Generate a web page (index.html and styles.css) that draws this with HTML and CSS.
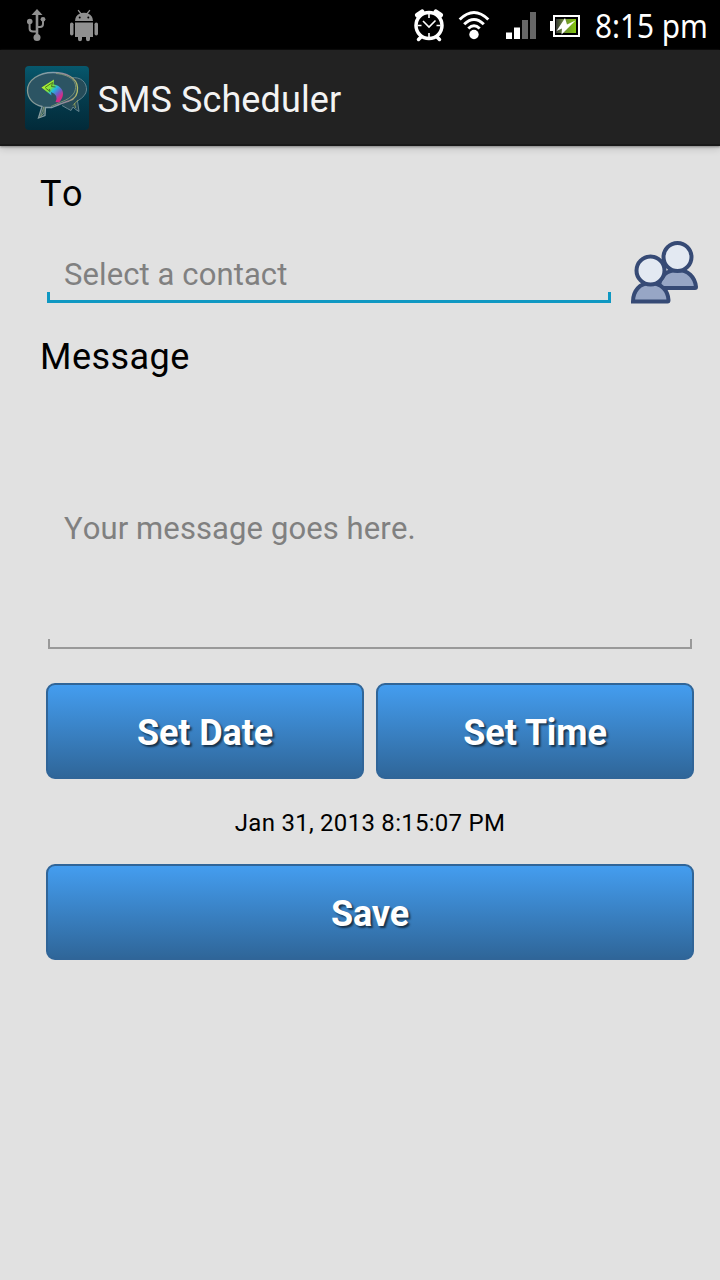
FILE: index.html
```html
<!DOCTYPE html>
<html lang="en">
<head>
<meta charset="utf-8">
<title>SMS Scheduler</title>
<link rel="stylesheet" href="styles.css">
</head>
<body>
<header class="status">
  <svg class="usb" width="20" height="34" viewBox="0 0 20 34" fill="none" stroke="#909090" stroke-width="2">
    <path d="M10 5V28" stroke-width="2.6"/><path d="M2.6 14V20.5Q2.6 23.500 6 23.500H10M16 12V16Q16 19 13 19H10"/>
    <path d="M10 1l5.500 6h-11z" fill="#909090" stroke="none"/>
    <circle cx="2.700" cy="13.500" r="2.800" fill="#909090" stroke="none"/><circle cx="16" cy="11.300" r="2.400" fill="#909090" stroke="none"/><circle cx="10" cy="29.500" r="3.500" fill="#909090" stroke="none"/>
  </svg>
  <svg class="droid" width="30" height="34" viewBox="0 0 30 34" fill="#909090">
    <path d="M6 12Q6 6.500 11 4.500L8.600 1.500 9.600 .8 12.300 4Q15 3.300 17.700 4L20.400 .8 21.400 1.500 19 4.500Q24 6.500 24 12z"/>
    <path d="M6 13.500H24V28H21V30.300a2 2 0 0 1-4 0V28h-4v2.300a2 2 0 0 1-4 0V28H6z"/>
    <rect x="1" y="13.500" width="3.500" height="13" rx="1.750"/><rect x="25.500" y="13.500" width="3.500" height="13" rx="1.750"/>
    <circle cx="10.700" cy="8.500" r="1" fill="#000"/><circle cx="19.300" cy="8.500" r="1" fill="#000"/>
  </svg>
  <svg class="alarm" width="32" height="34" viewBox="0 0 32 34" fill="none" stroke="#fff">
    <circle cx="16" cy="17.500" r="13" stroke-width="3.500"/>
    <path d="M4.500 7L9 4M27.500 7L23 4" stroke-width="5" stroke-linecap="round"/>
    <path d="M5.500 31.500l3-3M26.500 31.500l-3-3" stroke-width="3.500" stroke-linecap="round"/>
    <path d="M10 13l6 6 6.500-6.500M16 6v4M16 25v4M4.500 17.500h4M23.500 17.500h4" stroke-width="1.600"/>
  </svg>
  <svg class="wifi" width="32" height="32" viewBox="0 0 32 32" fill="none" stroke="#fff" stroke-width="3">
    <path d="M1.700 9.500Q16-4.500 30.300 9.500M6.200 14.300Q16 4.700 25.800 14.300M10.300 18.500Q16 13 21.700 18.500"/>
    <circle cx="16" cy="24.500" r="4.700" fill="#fff" stroke="none"/>
  </svg>
  <svg class="signal" width="32" height="28" viewBox="0 0 32 28">
    <path d="M1 20.500h6v6.500H1zM9 15.500h6V27H9z" fill="#fff"/><path d="M17 8h6v19h-6zM25 0h6v27h-6z" fill="#666"/>
  </svg>
  <svg class="battery" width="32" height="24" viewBox="0 0 32 24">
    <defs><linearGradient id="charge"><stop offset="0" stop-color="#363636"/><stop offset=".35" stop-color="#69843c"/><stop offset="1" stop-color="#84c80a"/></linearGradient></defs>
    <path d="M0 7h3v10H0z" fill="#fff"/><rect x="4" y="2" width="25" height="20" fill="#000" stroke="#fff" stroke-width="2"/>
    <rect x="6" y="5" width="20" height="14" fill="url(#charge)"/>
    <path d="M15 4L6.500 17 12 14.500 11.500 20.500 25.500 6.500 17 10.500z" fill="#fff"/>
  </svg>
  <span class="clock">8:15 pm</span>
</header>
<div class="actionbar">
  <svg class="logo" width="64" height="64" viewBox="0 0 64 64">
    <defs>
      <linearGradient id="tile" x1="0" y1="0" x2="0" y2="1"><stop offset="0" stop-color="#07586d"/><stop offset=".55" stop-color="#043a4b"/><stop offset="1" stop-color="#022a39"/></linearGradient>
      <linearGradient id="rim" x1="0" y1="0" x2="1" y2="0"><stop offset="0" stop-color="#8a9990"/><stop offset=".5" stop-color="#829eac"/><stop offset=".8" stop-color="#9a8695"/><stop offset="1" stop-color="#b5bf65"/></linearGradient>
      <linearGradient id="arrow" x1="17" y1="18" x2="36" y2="36" gradientUnits="userSpaceOnUse"><stop offset="0" stop-color="#c8f52a"/><stop offset=".34" stop-color="#7fe23a"/><stop offset=".48" stop-color="#20bde0"/><stop offset=".68" stop-color="#6a60c8"/><stop offset=".85" stop-color="#d52c86"/></linearGradient>
    </defs>
    <rect width="64" height="64" rx="4" fill="url(#tile)"/>
    <path d="M46 12C56 10 62 17 61.500 24Q61 30 52.500 35L54 45.500Q50 43.500 48 41L46 44.500Q43 43 37 39.500" fill="#264c59" stroke="#648590"/>
    <path d="M49.500 37l1 5M53 34l-5 5.500" stroke="#9aa75d" fill="none" stroke-width=".8"/>
    <path d="M28 6.500C14 6.500 2.500 14 2.500 24.500C2.500 32 8 38.500 17 40.500L13.500 52 20 49.500 20.500 41.500L27 41.500Q40 36 44 35C50 33 53 28 52.500 21.500C52 12 42 6.500 28 6.500z" fill="#2c5463" stroke="url(#rim)" stroke-width="1.300"/>
    <path d="M31 7.500C47 9 54 17 49 27Q45 33 36 36L26 40.500M19 40.500L15.500 50.500 19 47V41" fill="none" stroke="#8a9e78" stroke-width=".8"/>
    <path d="M16.500 21.500L29 13.500 28.500 18.500C37 19.500 42 28 34 36.500L30.500 36Q34 29 26 26L26.500 29.500z" fill="url(#arrow)"/>
    <path d="M20 21.500L27.500 16.500 26.500 20.500 30.500 21M20.500 22L25 25.500 24.500 23" fill="none" stroke="#3f5b1e" stroke-width=".8"/>
  </svg>
  <h1 class="title">SMS Scheduler</h1>
</div>
<main class="form">
  <div class="label label-to">To</div>
  <div class="recipient">
    <div class="field field-focused"><span class="hint">Select a contact</span></div>
    <svg class="contacts" width="70" height="64" viewBox="0 0 70 64" stroke="#364a75" stroke-width="4">
      <path d="M29 48V46C30 36 37 30 47.500 30C58 30 65 37 66 47Q66 48 65 48z" fill="#97a6c5"/>
      <circle cx="47.500" cy="17" r="14" fill="#e3e9f2"/>
      <path d="M3 61.500C3 51 9.500 43 20.500 43S38 51 38.500 60Q38.500 61.500 37.500 61.500z" fill="#97a6c5"/>
      <circle cx="20.500" cy="30.500" r="14" fill="#e3e9f2"/>
    </svg>
  </div>
  <div class="label label-message">Message</div>
  <div class="field field-message"><span class="hint">Your message goes here.</span></div>
  <div class="buttons">
    <button class="btn">Set Date</button>
    <button class="btn">Set Time</button>
  </div>
  <div class="when">Jan 31, 2013 8:15:07 PM</div>
  <button class="btn btn-save">Save</button>
</main>
</body>
</html>
```
FILE: styles.css
```css
* { box-sizing: border-box; }
body {
  margin: 0;
  width: 720px;
  height: 1280px;
  overflow: hidden;
  display: flex;
  flex-direction: column;
  background: #e1e1e1;
  font-family: Roboto, "Liberation Sans", sans-serif;
  color: #000;
}
svg { display: block; flex: none; }
.status {
  height: 50px;
  flex: none;
  display: flex;
  align-items: flex-start;
  padding: 8px 0 0 27px;
  background: #000;
}
.droid { margin: 1px 0 0 22px; }
.alarm { margin-left: 314px; }
.wifi { margin: 2px 0 0 13px; }
.signal { margin: 4px 0 0 15px; }
.battery { margin: 6px 0 0 13px; }
.clock {
  margin-left: 13px;
  font: 32px/36px "Noto Sans", sans-serif;
  color: #fff;
  white-space: nowrap;
  transform: scaleX(.93);
  transform-origin: left;
}
.actionbar {
  height: 96px;
  flex: none;
  display: flex;
  align-items: center;
  padding: 2px 0 0 25px;
  background: #222;
  border-bottom: 2px solid #191919;
  box-shadow: 0 1px 2px #888, 0 2px 8px rgba(0, 0, 0, .18);
}
.title {
  margin: 3px 0 0 8.5px;
  font-size: 36px;
  font-weight: 400;
  line-height: 42px;
  letter-spacing: .1px;
  color: #f3f3f3;
}
.form {
  flex: 1;
  display: flex;
  flex-direction: column;
  padding: 27px 26px 0 40px;
}
.label {
  font-size: 36px;
  line-height: 42px;
  letter-spacing: .45px;
}
.label-to { font-kerning: none; }
.label-message { margin-top: 32px; }
.recipient {
  display: flex;
  margin: 25px -10px 0 7px;
  height: 64px;
}
.field {
  position: relative;
  padding-left: 17px;
}
.field::after {
  content: "";
  position: absolute;
  inset: auto 0 0 0;
  height: 8px;
  border: 2px solid #999;
  border-top: 0;
}
.field-focused { width: 564px; height: 63px; }
.field-focused::after { border-width: 0 3px 3px; border-color: #0f98c2; }
.hint {
  display: block;
  font-size: 31px;
  line-height: 38px;
  letter-spacing: .1px;
  font-kerning: none;
  color: #808080;
}
.field-focused .hint { padding-top: 16px; }
.contacts { margin-left: 19px; }
.field-message {
  height: 250px;
  margin: 21px 2px 0 8px;
  display: flex;
  align-items: center;
  padding: 10px 0 0 16px;
}
.buttons {
  display: flex;
  gap: 12px;
  margin: 34px 0 0 6px;
}
.btn {
  flex: 1;
  height: 96px;
  padding: 3px 0 0;
  border: 2px solid #306598;
  border-radius: 9px;
  background: linear-gradient(#449def, #2f6699);
  color: #fff;
  font: 700 36px/42px Roboto, "Liberation Sans", sans-serif;
  letter-spacing: -.1px;
  text-shadow: 2px 2px 2px rgba(0, 0, 0, .6);
}
.when {
  margin: 30px 0 27px 6px;
  font-size: 24px;
  line-height: 28px;
  letter-spacing: .27px;
  text-align: center;
}
.btn-save { flex: none; margin-left: 6px; }
```
